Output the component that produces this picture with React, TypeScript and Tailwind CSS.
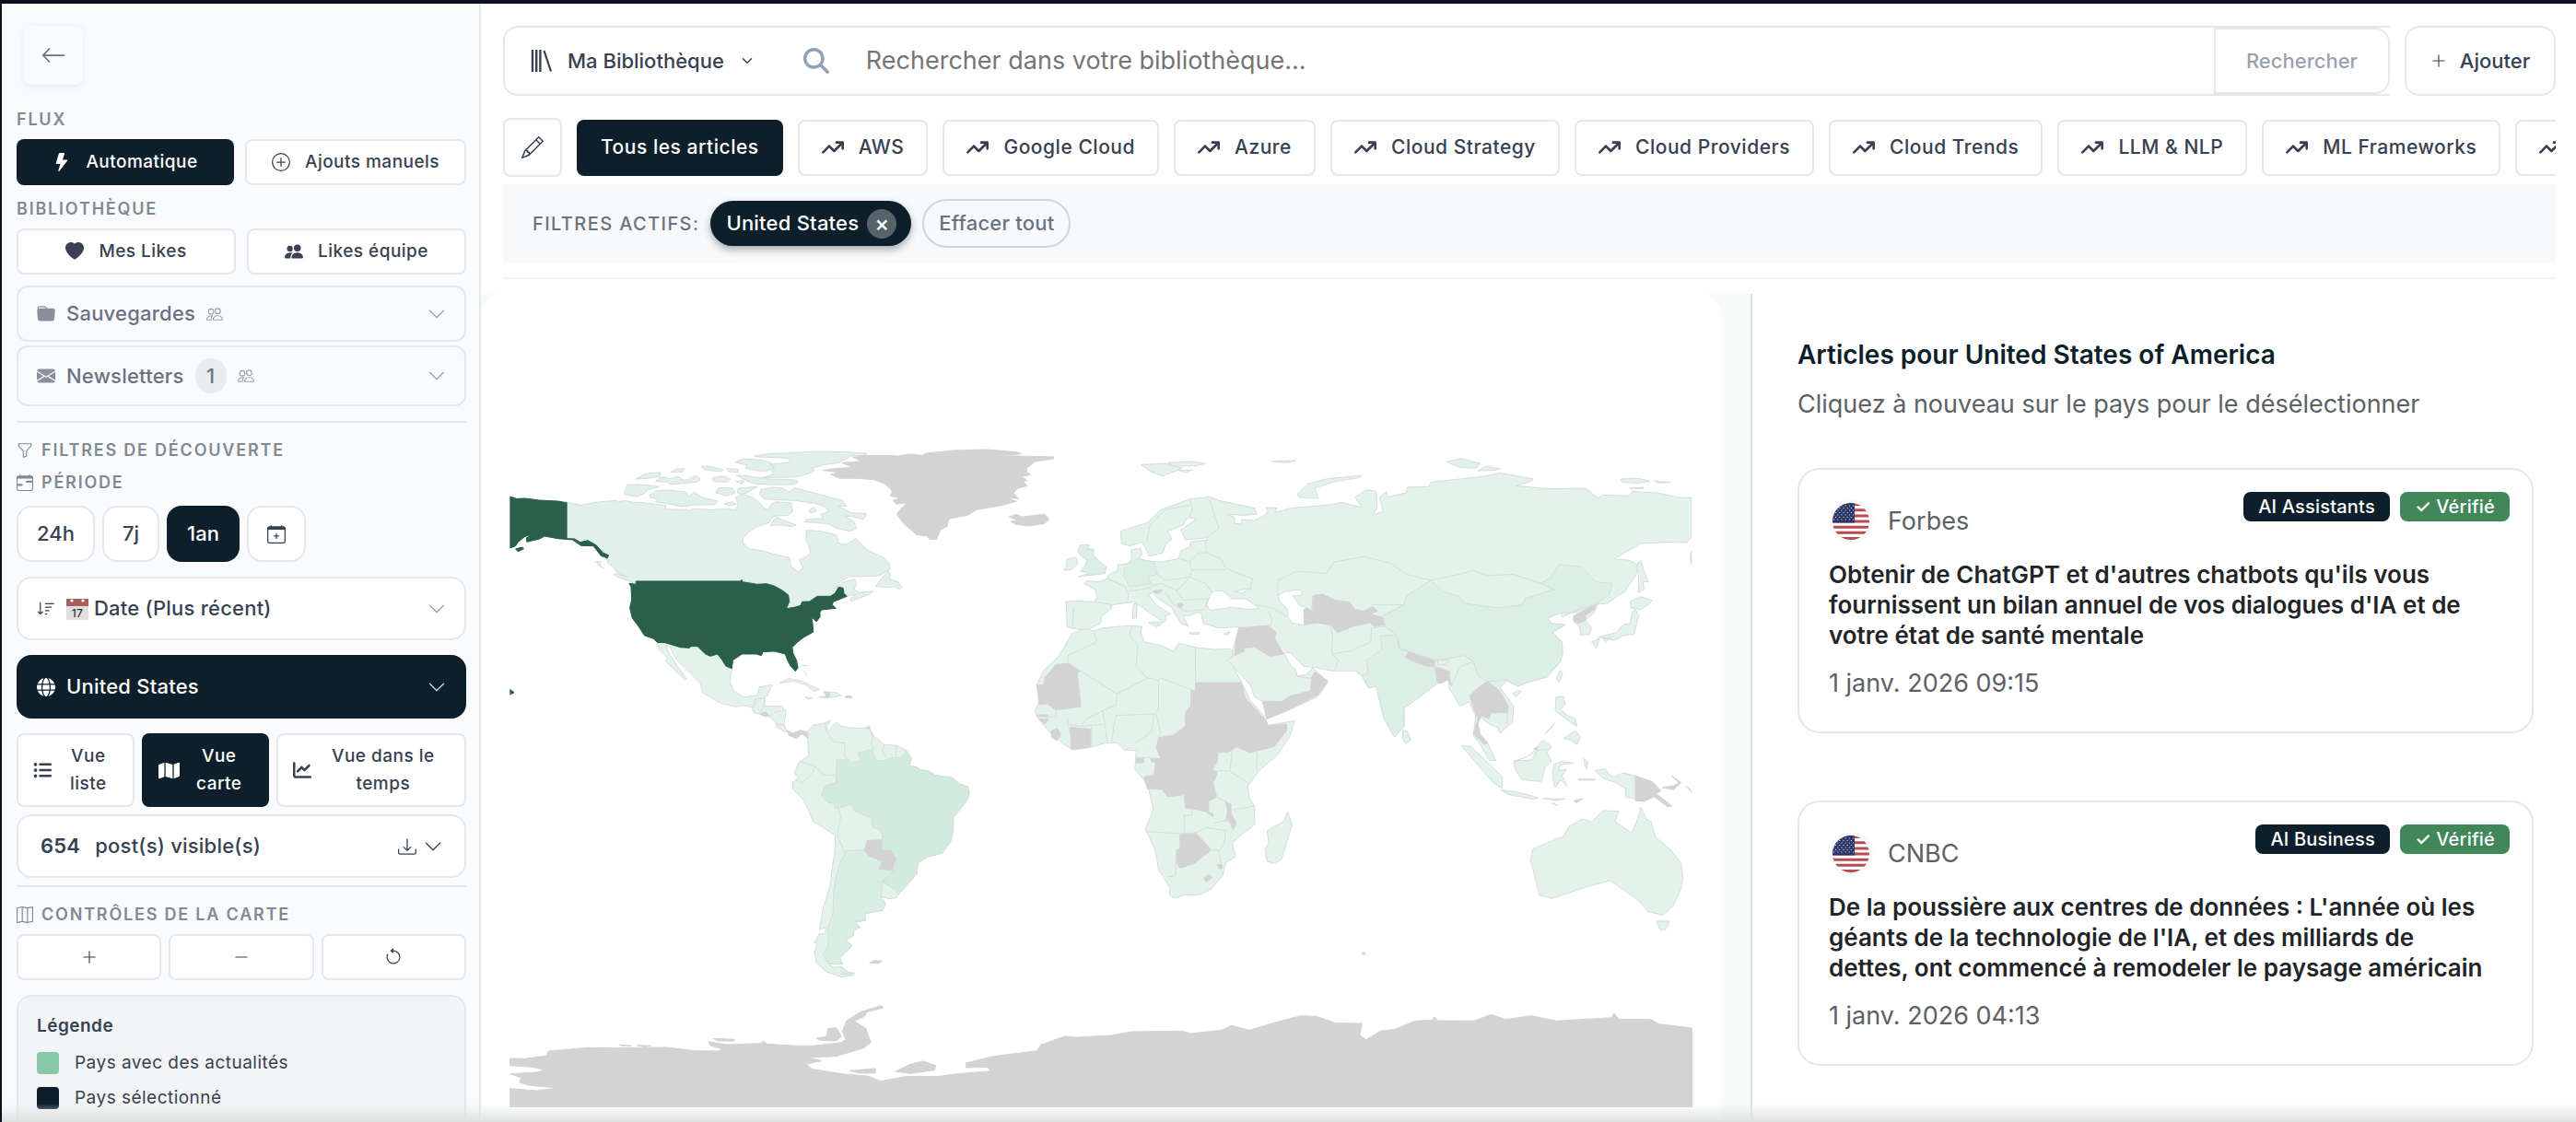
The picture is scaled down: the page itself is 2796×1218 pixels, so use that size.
import type { ReactNode } from "react";
import {
  BsArrowCounterclockwise,
  BsArrowLeft,
  BsCalendarPlus,
  BsCalendarRange,
  BsChevronDown,
  BsDashLg,
  BsDownload,
  BsEnvelopeFill,
  BsFolderFill,
  BsFunnel,
  BsHeartFill,
  BsLightningFill,
  BsMap,
  BsPencil,
  BsPeople,
  BsPeopleFill,
  BsPlusCircle,
  BsPlusLg,
  BsSortDown,
} from "react-icons/bs";
import { FaArrowTrendUp, FaChartLine, FaGlobe, FaListUl, FaMagnifyingGlass, FaMap } from "react-icons/fa6";
import { ChevronDown } from "lucide-react";

const LIGHT = "#e4f2ec";
const MID = "#dcefe7";
const GREY = "#d3d3d3";
const DARK = "#2a5f49";

type Shape = { fill: string; d: string };

const northAmerica: Shape[] = [
  {
    fill: "#e1f0ea",
    d: "M184 257 L225 265 L260 256 L315 250 L322 254 L340 250 L360 256 L380 256 L420 262 L448 266 L445 278 L500 280 L512 283 L520 277 L570 280 L600 278 L635 280 L640 260 L633 240 L655 230 L678 240 L700 260 L708 275 L720 280 L728 262 L740 254 L780 258 L785 285 L775 298 L740 300 L728 308 L722 322 L690 335 L665 355 L652 375 L652 388 L670 408 L700 412 L735 425 L776 436 L780 462 L800 483 L812 470 L803 443 L832 425 L830 400 L820 380 L822 347 L860 350 L890 358 L903 364 L906 388 L925 394 L953 374 L985 412 L1030 438 L1043 458 L1043 475 L1015 495 L985 497 L935 498 L910 515 L893 538 L920 515 L950 507 L955 520 L948 540 L960 550 L1000 545 L985 557 L940 578 L938 570 L955 555 L929 562 L921 552 L919 535 L907 532 L898 552 L885 562 L850 562 L830 579 L810 580 L806 592 L768 602 L776 578 L773 557 L735 528 L715 521 L690 523 L649 508 L648 512 L368 512 L372 535 L355 515 L312 495 L310 488 L345 498 L330 490 L318 485 L310 470 L295 455 L290 440 L295 428 L280 420 L262 395 L240 380 L220 386 L205 375 L184 374Z M405 232 L420 220 L445 216 L500 222 L510 236 L522 222 L545 240 L585 252 L580 263 L520 265 L490 270 L460 262 L420 255 L428 246 L405 240Z M345 198 L400 200 L430 205 L400 215 L390 228 L370 238 L337 230Z M368 180 L395 163 L433 158 L432 170 L400 178Z M420 188 L432 174 L460 178 L480 172 L495 185 L510 180 L525 168 L540 180 L530 190 L460 198 L450 190Z M462 158 L475 147 L497 146 L492 157Z M542 138 L570 140 L600 150 L595 156 L550 150Z M572 176 L600 170 L620 180 L612 190 L574 188Z M610 146 L640 148 L640 158 L615 156Z M683 105 L720 98 L770 95 L850 90 L930 92 L982 97 L975 105 L940 105 L925 115 L905 128 L870 133 L835 145 L843 152 L825 163 L800 172 L760 175 L705 175 L735 165 L728 155 L740 143 L725 133 L780 125 L770 112 L700 108Z M632 125 L655 114 L700 118 L728 128 L735 145 L715 154 L685 152 L660 145 L664 135Z M635 168 L665 170 L720 180 L790 183 L800 190 L790 198 L720 198 L680 195 L650 178Z M700 215 L730 207 L760 210 L775 222 L790 208 L840 225 L870 235 L900 245 L918 250 L928 268 L905 268 L940 290 L982 293 L972 312 L945 302 L925 300 L948 320 L955 340 L938 350 L900 340 L880 325 L815 320 L822 312 L865 308 L860 295 L880 285 L870 270 L845 260 L790 250 L745 248 L710 245 L697 230Z M640 210 L692 205 L668 222 L650 232 L638 225Z M590 208 L625 210 L632 225 L610 235 L580 225Z M633 188 L655 185 L650 196Z M602 260 L625 255 L635 262 L615 266Z M735 312 L742 305 L795 330 L780 335 L755 330 L725 332Z M828 282 L840 272 L848 285 L832 290Z M1005 530 L1020 505 L1040 480 L1045 495 L1040 505 L1065 515 L1075 530 L1068 540 L1055 530 L1040 533Z M262 448 L275 450 L272 460 L283 472 L270 462Z",
  },
  {
    fill: GREY,
    d: "M865 152 L890 147 L945 142 L915 127 L970 122 L945 110 L975 103 L1030 103 L1065 105 L1100 99 L1130 103 L1140 96 L1210 87 L1300 84 L1380 92 L1393 97 L1375 101 L1290 103 L1380 105 L1480 108 L1478 114 L1430 123 L1407 145 L1407 158 L1418 166 L1395 172 L1408 185 L1398 188 L1409 202 L1385 210 L1372 225 L1385 245 L1350 238 L1380 253 L1340 266 L1275 280 L1250 298 L1200 310 L1195 335 L1178 345 L1168 376 L1150 376 L1140 365 L1115 362 L1080 325 L1062 295 L1070 280 L1090 258 L1060 262 L1052 250 L1070 243 L1045 235 L1050 220 L1030 195 L1000 182 L960 178 L910 178 L885 165 L910 158Z M1360 303 L1380 295 L1395 303 L1420 300 L1455 294 L1467 312 L1455 325 L1415 333 L1378 328 L1365 318 L1383 315Z",
  },
  {
    fill: LIGHT,
    d: "M425 713 L446 713 L486 728 L510 730 L515 725 L532 725 L553 750 L566 757 L585 750 L595 765 L608 790 L623 797 L618 840 L628 870 L655 890 L690 885 L697 857 L730 850 L718 885 L712 893 L685 897 L688 910 L678 925 L655 917 L632 922 L590 908 L545 875 L540 845 L515 815 L478 770 L465 745 L460 728 L447 725 L460 755 L478 790 L503 830 L498 834 L470 800 L447 775 L452 762 L430 735Z M678 925 L685 897 L712 893 L710 920 L755 920 L767 935 L762 980 L770 1005 L760 1000 L740 985 L742 978 L725 955 L680 940Z M712 893 L708 920 L698 940 M767 932 L740 940 L722 952 M742 978 L762 982 M750 845 L775 830 L810 838 L857 866 L840 870 L820 850 L785 838Z M883 873 L900 875 L915 885 L885 893Z M818 890 L837 893 L825 897Z M815 805 l8 18 M808 788 l18 0",
  },
  {
    fill: GREY,
    d: "M698 945 L712 938 L722 950 L712 954Z M770 998 L785 1008 L805 998 L825 1005 L825 1025 L810 1010 L795 1025 L775 1015Z M855 890 L875 888 L868 872 L883 875 L882 892Z M926 887 h16 v6 h-16Z",
  },
  {
    fill: DARK,
    d: "M350 520 L368 523 L368 513 L648 513 L649 508 L652 515 L672 519 L690 523 L715 521 L735 528 L755 541 L773 557 L776 578 L768 602 L790 598 L806 592 L810 580 L830 579 L850 562 L885 562 L898 552 L907 532 L919 535 L921 552 L929 562 L893 580 L890 590 L900 601 L862 606 L857 615 L858 628 L848 645 L836 630 L840 678 L815 695 L797 712 L784 728 L785 745 L795 770 L799 795 L792 806 L780 790 L771 770 L765 750 L750 745 L735 741 L705 743 L702 755 L688 750 L650 750 L626 770 L623 797 L608 790 L595 765 L585 750 L566 757 L553 750 L532 725 L515 725 L510 730 L486 728 L446 713 L425 712 L415 700 L391 690 L375 660 L358 632 L352 600 L357 570 L355 530Z M34 237 L50 244 L75 243 L110 249 L160 252 L184 257 L184 374 L205 375 L220 386 L240 380 L262 395 L280 420 L295 428 L292 438 L275 430 L255 398 L222 397 L200 378 L160 374 L125 366 L112 375 L78 385 L77 372 L90 360 L72 368 L55 385 L48 398 L34 405Z M48 408 L65 402 L70 407 L55 416Z M34 866 L44 875 L34 882Z",
  },
];

const southAmerica: Shape[] = [
  {
    fill: LIGHT,
    d: "M103 105 L118 82 L155 75 L172 65 L160 85 L168 105 L175 88 L190 72 L205 85 L230 90 L290 92 L305 118 L335 145 L375 148 L403 165 L418 190 L412 215 L435 218 L440 225 L470 232 L490 245 L540 252 L568 275 L590 282 L594 305 L585 330 L545 382 L545 425 L537 460 L512 498 L470 510 L437 530 L435 565 L385 625 L372 643 L350 647 L325 640 L340 665 L330 685 L277 695 L278 718 L247 722 L262 740 L243 750 L240 770 L218 780 L238 800 L200 840 L208 860 L165 858 L180 870 L205 868 L225 885 L245 890 L240 896 L205 902 L160 885 L130 858 L123 820 L133 795 L123 790 L137 762 L155 760 L158 740 L138 748 L150 675 L170 610 L178 540 L187 480 L186 440 L120 395 L90 325 L58 290 L57 270 L75 250 L62 240 L75 205 L105 180 L103 130Z",
  },
  {
    fill: "#d2ebdf",
    d: "M190 195 L228 195 L235 207 L265 195 L255 172 L300 160 L308 195 L330 198 L365 187 L390 187 L403 165 L418 190 L412 215 L435 218 L440 225 L470 232 L490 245 L540 252 L568 275 L590 282 L594 305 L585 330 L545 382 L545 425 L537 460 L512 498 L470 510 L437 530 L435 565 L385 625 L330 590 L375 545 L370 520 L355 490 L328 490 L330 440 L322 420 L300 415 L298 385 L243 360 L240 338 L195 352 L183 350 L183 338 L162 332 L145 310 L155 280 L190 268Z",
  },
  {
    fill: "#d9eee4",
    d: "M222 490 L272 488 L285 500 L330 525 L320 550 L360 555 L370 535 L375 545 L330 590 L325 640 L340 665 L330 685 L277 695 L278 718 L247 722 L262 740 L243 750 L240 770 L218 780 L238 800 L200 840 L208 860 L165 858 L150 830 L165 800 L165 740 L180 690 L182 620 L190 570 L205 520Z M205 868 L225 885 L245 890 L205 892Z",
  },
  {
    fill: GREY,
    d: "M275 490 L283 458 L325 455 L328 490 L355 490 L370 515 L360 553 L320 550 L330 525 L290 508Z M290 856 L305 848 L328 850 L320 857Z M280 90 L292 83 L290 93Z",
  },
  {
    fill: "none",
    d: "M155 75 L160 105 L180 135 L215 140 L215 185 L228 195 M290 92 L300 120 L295 145 L308 160 M335 145 L330 165 L345 190 M372 148 L370 187 M80 200 L125 215 L150 243 L187 245 L190 268 M125 215 L120 235 L85 270 L68 262 M195 352 L203 380 L192 440 L205 470 L215 500 L222 490 M330 590 L380 630",
  },
];

const oldWorld: Shape[] = [
  {
    fill: LIGHT,
    d: "M147 674 L160 668 L180 675 L200 665 L255 658 L288 660 L285 680 L293 710 L330 722 L358 740 L370 715 L407 728 L450 735 L485 733 L492 745 L485 770 L510 840 L530 900 L560 950 L570 982 L630 967 L618 1020 L590 1080 L550 1130 L525 1180 L528 1220 L540 1245 L540 1305 L510 1340 L490 1365 L497 1410 L475 1430 L469 1470 L443 1515 L418 1533 L381 1535 L362 1545 L350 1535 L350 1510 L335 1472 L325 1455 L318 1390 L296 1320 L313 1255 L303 1190 L292 1160 L272 1125 L275 1065 L248 1062 L235 1040 L205 1040 L170 1055 L132 1062 L105 1035 L75 995 L55 960 L48 935 L58 905 L52 850 L70 800 L100 760 L115 725 L130 685Z M614 1265 L624 1305 L600 1420 L583 1432 L568 1425 L563 1385 L572 1365 L568 1325 L605 1295Z",
  },
  {
    fill: LIGHT,
    d: "M118 580 L135 577 L180 580 L187 565 L183 540 L158 520 L165 512 L190 515 L210 505 L215 490 L232 480 L235 460 L255 455 L265 440 L263 410 L285 405 L288 425 L282 438 L300 448 L330 450 L370 440 L375 415 L395 400 L397 385 L435 378 L430 372 L385 378 L375 345 L410 310 L390 305 L380 330 L345 350 L355 375 L340 395 L335 420 L305 432 L288 385 L260 398 L242 390 L240 350 L300 322 L330 280 L395 245 L440 238 L460 250 L500 262 L540 275 L545 295 L515 298 L480 295 L495 305 L495 325 L510 327 L510 312 L540 315 L560 300 L570 285 L565 272 L590 275 L585 290 L620 275 L700 265 L735 257 L780 272 L765 240 L790 215 L812 220 L815 270 L805 298 L828 285 L820 240 L835 220 L838 238 L880 225 L882 207 L930 205 L935 190 L1000 180 L1060 170 L1090 160 L1165 180 L1155 190 L1125 202 L1200 212 L1280 210 L1310 242 L1320 232 L1380 235 L1385 220 L1440 225 L1490 240 L1518 241 L1518 368 L1508 388 L1480 385 L1405 390 L1345 440 L1380 445 L1398 460 L1395 490 L1370 545 L1330 585 L1308 588 L1300 615 L1280 640 L1295 665 L1290 685 L1270 690 L1268 660 L1255 645 L1265 615 L1250 615 L1228 630 L1225 615 L1195 635 L1205 650 L1235 655 L1208 680 L1228 710 L1230 745 L1225 775 L1195 825 L1150 843 L1130 855 L1105 838 L1090 860 L1120 920 L1118 970 L1090 1008 L1085 990 L1068 980 L1045 955 L1040 980 L1042 1010 L1062 1040 L1080 1098 L1065 1095 L1048 1050 L1030 1015 L1035 950 L1020 905 L1000 920 L990 895 L975 860 L975 830 L960 845 L945 845 L905 895 L875 925 L875 985 L853 1020 L830 960 L812 855 L795 860 L780 820 L765 805 L715 805 L680 795 L650 790 L620 745 L605 745 L622 790 L632 800 L635 822 L655 818 L670 795 L705 840 L680 890 L620 930 L567 962 L558 905 L540 890 L530 850 L480 770 L492 755 L490 745 L500 690 L505 662 L460 665 L425 650 L420 615 L410 615 L395 625 L380 625 L392 660 L375 650 L362 620 L355 600 L320 565 L315 550 L302 555 L320 590 L352 620 L340 625 L342 640 L325 660 L330 640 L285 595 L270 580 L255 583 L220 590 L220 602 L198 625 L195 650 L170 668 L145 670 L120 662Z",
  },
  {
    fill: MID,
    d: "M935 510 L880 560 L875 590 L820 630 L832 660 L860 690 L865 730 L885 742 L943 772 L1010 755 L1030 775 L1040 820 L1060 840 L1105 835 L1130 855 L1150 843 L1195 825 L1225 775 L1230 745 L1228 710 L1208 680 L1235 655 L1205 650 L1195 635 L1225 615 L1250 615 L1305 588 L1335 555 L1340 520 L1305 515 L1270 465 L1220 458 L1205 500 L1180 520 L1210 540 L1145 570 L1140 590 L1085 600 L1010 585 L1000 563 L960 545Z M822 690 L855 688 L865 735 L885 742 L877 762 L943 792 L950 845 L905 895 L875 925 L875 985 L853 1020 L830 960 L812 855 L795 860 L780 820 L795 812 L790 770 L825 735Z M250 460 L280 440 L315 450 L322 490 L300 500 L310 520 L260 530 L247 495Z M150 395 L170 394 L165 407 L180 410 L178 425 L190 445 L208 465 L205 488 L145 498 L170 487 L150 480 L160 462 L165 445 L155 435 L143 415Z",
  },
  {
    fill: "#ffffff",
    d: "M440 560 L450 545 L470 545 L490 570 L520 570 L550 600 L530 605 L490 598 L440 607 L433 590Z M495 545 L535 535 L510 552Z M592 560 L610 545 L645 540 L647 560 L625 560 L640 590 L655 600 L650 655 L625 650 L615 630 L612 600 L597 580Z",
  },
  {
    fill: LIGHT,
    d: "M635 230 L660 195 L700 180 L780 168 L775 175 L715 190 L675 210 L683 243 L640 240Z M285 133 L340 130 L378 145 L335 170 L310 158Z M345 127 L400 123 L430 130 L410 137 L360 138Z M372 152 L400 150 L385 160Z M578 122 L632 120 L610 127Z M970 124 L1005 114 L1045 130 L1035 145 L1000 142Z M1040 153 L1060 138 L1090 147 L1075 152Z M1360 180 L1400 178 L1425 187 L1400 194 L1362 190Z M1435 186 l38 5 l-30 2Z M1380 210 l30 -3 v5Z M120 440 L140 435 L145 455 L130 475 L112 477 L118 465Z M270 585 L277 590 L275 632 L267 635 L267 608Z M302 648 L325 645 L322 662Z M395 680h22v5h-22Z M470 685 L485 677 L480 688Z M1405 445 L1412 480 L1422 515 L1410 515 L1412 540 L1400 550 L1400 490 L1395 460Z M1382 578 L1405 563 L1430 575 L1425 585 L1405 605 L1383 600Z M1393 605 L1400 625 L1390 685 L1365 690 L1345 705 L1310 695 L1350 680 L1365 655 L1382 650 L1385 615Z M1295 710 L1312 700 L1305 732Z M1320 700 l18 -5 l-12 15Z M1215 830 L1225 803 L1230 815 L1222 843Z M1118 880 L1130 868 L1137 872 L1125 890Z M872 998 L882 1003 L890 1030 L878 1043 L872 1025Z M1215 890 L1232 888 L1235 915 L1225 930 L1240 950 L1258 960 L1262 985 L1245 970 L1228 950 L1213 935Z M1232 1025 L1258 1000 L1270 1020 L1262 1045 L1248 1030Z M1190 1010 L1212 975 L1205 990Z M1003 1048 L1025 1052 L1060 1100 L1095 1150 L1095 1188 L1075 1170 L1045 1120Z M1090 1192 L1130 1200 L1175 1218 L1165 1223 L1110 1208Z M1185 1220 l50 2 l-20 5Z M1205 1235 l15 8Z M1120 1100 L1150 1085 L1170 1060 L1185 1030 L1205 1050 L1195 1070 L1205 1100 L1190 1120 L1183 1165 L1140 1160 L1125 1130Z M1120 1098 L1160 1095 L1175 1062 L1195 1062 M1210 1110 L1225 1100 L1255 1105 L1225 1110 L1220 1130 L1240 1125 L1228 1145 L1240 1180 L1225 1160 L1213 1185 L1207 1150Z M1303 1130 L1325 1123 L1335 1145 L1345 1150 L1365 1137 L1393 1147 L1393 1222 L1370 1215 L1372 1190 L1350 1170 L1320 1155Z M1278 1090 l8 10 l-3 25 l-4 -15Z M1265 1157h38v4h-38Z M1158 1420 L1163 1385 L1195 1365 L1230 1345 L1245 1310 L1275 1287 L1295 1298 L1320 1260 L1355 1262 L1347 1295 L1385 1333 L1397 1290 L1405 1248 L1418 1290 L1428 1295 L1437 1345 L1470 1385 L1495 1430 L1499 1480 L1496 1510 L1476 1573 L1454 1600 L1421 1589 L1399 1552 L1373 1525 L1336 1488 L1281 1509 L1207 1546 L1178 1536 L1172 1500Z M1440 1620 L1469 1620 L1460 1648 L1448 1648Z M1518 415 L1515 435 L1518 458Z",
  },
  {
    fill: GREY,
    d: "M122 780 L150 805 L143 812 L151 922 L95 932 L75 912 L58 915 L53 852 L67 850 L72 825 L95 785Z M53 948 h25 v4 h-25Z M57 962 L79 962 L70 978Z M85 1000 L98 992 L106 1015 L97 1032 L85 1020Z M127 988 L172 995 L172 1052 L130 1060Z M408 843 L510 843 L520 895 L565 965 L570 985 L612 978 L612 1000 L583 1052 L545 1065 L530 1072 L500 1052 L480 1070 L458 1070 L457 1100 L445 1125 L457 1135 L447 1170 L455 1215 L437 1230 L437 1265 L447 1270 L447 1280 L430 1262 L385 1250 L383 1208 L345 1215 L333 1190 L300 1190 L293 1150 L315 1145 L318 1105 L308 1098 L308 1090 L330 1090 L320 1055 L325 1022 L358 1015 L385 985 L385 940 L397 920 L398 870 L408 868Z M275 1090h17v14h-17Z M475 1230 L487 1240 L487 1268 L499 1300 L492 1322 L485 1298 L476 1290 L480 1260Z M373 1340 L408 1332 L443 1388 L405 1432 L378 1445 L372 1445 L366 1430 L366 1388 L373 1385Z M426 1480 L438 1468 L445 1478 L432 1493Z M458 1435 l9 2 v12 h-8Z M671 560 L692 555 L720 575 L752 580 L765 605 L785 610 L805 595 L815 610 L800 620 L825 630 L832 655 L808 660 L800 648 L765 658 L725 680 L710 655 L680 648 L652 655 L650 605 L658 600 L668 610Z M505 665 L570 657 L588 680 L585 700 L605 750 L575 757 L540 728 L515 730 L518 740 L495 755 L498 710Z M675 808 L703 838 L685 880 L620 930 L567 960 L558 903 L600 905 L620 887 L665 870 L668 825Z M885 742 L943 772 L943 792 L915 785 L877 762Z M945 792 L978 808 L975 820 L982 855 L972 835 L950 845Z M1022 885 L1045 855 L1062 840 L1085 865 L1108 920 L1105 940 L1070 942 L1065 960 L1048 952 L1040 975 L1045 1010 L1062 1040 L1055 1045 L1030 1010 L1040 960 L1030 925Z M1255 625 L1305 588 L1300 605 L1280 625 L1282 640 L1265 650 L1253 640Z M312 545 L335 540 L325 555Z M366 590 l8 -8 l7 8 l-7 8Z M1255 1228 L1275 1220 L1260 1235Z M1393 1147 L1430 1165 L1450 1195 L1440 1205 L1475 1245 L1465 1247 L1435 1215 L1412 1230 L1393 1228Z M1453 1185 L1480 1178 L1490 1170 L1475 1148 L1495 1168 L1478 1192Z M1507 1180 L1518 1195 V1200Z M1165 1060 l8 -8 v10Z M781 1722 h7 v6 h-7Z",
  },
  {
    fill: "none",
    d: "M180 675 L186 712 L122 755 L122 780 M150 805 L232 880 L300 828 L325 835 L330 828 L405 870 M265 660 L260 690 L278 720 L275 790 L300 828 M407 728 L408 843 M232 880 L230 915 L200 935 L165 960 L150 985 L125 980 M325 835 L325 930 L315 945 L230 950 L225 980 L220 1038 M95 932 L95 955 L55 955 M315 945 L310 1000 L270 1045 M320 945 L330 1010 L325 1022 M175 980 L175 1052 M205 980 L210 1038 M150 985 L205 978 L200 935 M275 1088 h35 M458 1130 L482 1130 L525 1170 M490 1060 L485 1130 M545 1065 V1130 M490 1258 L540 1245 M296 1328 L375 1335 L408 1332 M365 1388 L363 1472 L345 1475 M383 1275 V1335 M400 1255 V1275 H383 M408 1332 L430 1315 L475 1325 L472 1370 L460 1390 L443 1388 M460 1390 L465 1435 M455 1215 L475 1230 M450 1300 L485 1290 M120 960 L125 1000 M592 560 L592 510 L635 480 L700 488 L718 450 L785 433 L845 455 L880 490 L935 510 M671 560 V610 M875 590 L805 590 M935 510 L1000 490 L1030 478 L1060 495 L1120 490 L1180 520 M395 245 L400 275 L395 305 M300 380 L305 330 L340 280 L395 265 M440 250 L450 300 L460 340 L432 372 M430 380 L432 420 L465 440 L475 470 L535 505 L530 540 M395 450 L400 480 L395 500 L340 510 L322 490 M375 440 L395 450 L415 420 L432 420 M400 475 L475 475 M380 525 L395 500 L430 520 L445 550 M370 545 L330 520 L305 530 M430 600 L435 570 L380 575 L365 545 L380 525 M340 550 L360 590 L385 610 L430 605 M135 600 L132 658 M183 580 L222 590 M210 505 L250 530 L258 555 L255 583 M258 545 L310 535 M545 590 L580 600 L615 630 M570 610 L580 640 L575 660 M710 655 L715 700 L713 750 L728 770 L718 805 M713 750 L755 740 L800 710 L802 665 L832 660 M982 850 L1000 790 L1030 775 M1062 840 L1090 870 L1108 920 L1105 975 M668 830 L635 822 M950 770 h25 l-5 14 h-20Z",
  },
];

const antarctica: Shape[] = [
  {
    fill: GREY,
    d: "M16 327 L35 328 L62 318 L65 303 L115 292 L150 293 L215 291 L250 302 L282 303 L284 295 L270 285 L268 272 L290 282 L335 278 L337 270 L342 280 L380 286 L400 286 L437 275 L442 265 L438 240 L443 205 L460 177 L487 155 L490 162 L470 175 L465 192 L453 205 L468 230 L474 275 L465 293 L430 320 L395 324 L412 335 L392 345 L400 362 L440 378 L470 384 L487 401 L520 385 L560 386 L580 378 L627 368 L622 355 L595 357 L595 342 L630 320 L685 302 L690 283 L720 255 L735 258 L780 252 L805 240 L870 238 L880 246 L920 235 L932 220 L955 235 L985 212 L1020 188 L1040 190 L1065 212 L1098 213 L1095 250 L1103 266 L1122 237 L1140 232 L1165 205 L1187 202 L1190 192 L1194 204 L1240 205 L1262 184 L1280 200 L1313 188 L1345 205 L1415 194 L1418 180 L1424 199 L1465 200 L1475 215 L1517 228 V487 H16 V425 L50 432 L78 423 L40 415 L28 405 L30 390 L16 377 L50 372 L60 365 L45 355 L16 350Z M405 262 L418 255 L420 230 L430 227 L437 255 L430 270 L410 268Z M505 370 L525 345 L540 336 L557 350 L555 365 L525 376Z M447 367 L480 360 V375 L460 375Z M274 262 L302 265 L300 270 L280 270Z M155 282 l15 4 h-12Z M177 284 l18 2 l-8 4Z",
  },
];

function Region({ shapes, transform }: { shapes: Shape[]; transform: string }) {
  return (
    <g transform={transform}>
      {shapes.map((s) => (
        <path
          key={s.d}
          d={s.d}
          fill={s.fill}
          stroke={s.fill === GREY || s.fill === DARK ? s.fill : "#d6ddd9"}
          strokeWidth="1"
          strokeLinejoin="round"
          vectorEffect="non-scaling-stroke"
        />
      ))}
    </g>
  );
}

function WorldMap() {
  return (
    <svg
      viewBox="553 351 1284 851"
      preserveAspectRatio="xMidYMax meet"
      className="h-full w-full"
      role="img"
      aria-label="Carte du monde"
    >
      <Region shapes={antarctica} transform="translate(540 1040) scale(.85459 .33333)" />
      <Region shapes={southAmerica} transform="translate(840 760) scale(.35714 .33333)" />
      <Region shapes={oldWorld} transform="translate(1100 460) scale(.48469 .33333)" />
      <Region shapes={northAmerica} transform="translate(540 460) scale(.40816 .33333)" />
    </svg>
  );
}

function BooksIcon() {
  return (
    <svg viewBox="0 0 24 24" className="size-6 shrink-0" fill="none" stroke="currentColor" strokeWidth="2.4">
      <path d="M2 0v24M6.200 0v24M10.400 0v24" />
      <path d="M14.500 1l7.500 22.500" strokeWidth="2.200" />
    </svg>
  );
}

function CalendarEmoji() {
  return (
    <svg viewBox="0 0 24 24" className="size-6 shrink-0" aria-hidden="true">
      <path fill="#dfdfdf" d="M0 8h24v16H0z" />
      <path fill="#a45f60" d="M0 1h24v8H0z" />
      <circle cx="6" cy="3" r="1.600" fill="#fff" />
      <circle cx="18" cy="3" r="1.600" fill="#fff" />
      <text x="12" y="21" textAnchor="middle" fontSize="12" fill="#333" fontFamily="Inter, sans-serif">
        17
      </text>
    </svg>
  );
}

function Flag() {
  return (
    <svg viewBox="0 0 48 48" className="size-12 shrink-0" role="img" aria-label="Drapeau des États-Unis">
      <defs>
        <clipPath id="disc">
          <circle cx="24" cy="24" r="20" />
        </clipPath>
      </defs>
      <circle cx="24" cy="24" r="24" fill="#f8f9fb" />
      <g clipPath="url(#disc)">
        <path fill="#fff" d="M4 4h40v40H4z" />
        <path
          fill="#b94a50"
          d="M4 4h40v3H4zM4 10.200h40v3H4zM4 16.400h40v3H4zM4 22.500h40v3H4zM4 28.700h40v3H4zM4 34.800h40v3H4zM4 41h40v3H4z"
        />
        <path fill="#2b3768" d="M4 4h24v21.500H4z" />
        <g stroke="#d5d9e6" strokeWidth="1.200" strokeDasharray="1.200 3">
          <path d="M5 7h22M5 12h22M5 17h22M5 22h22" />
          <path d="M7 9.500h20M7 14.500h20M7 19.500h20" />
        </g>
      </g>
    </svg>
  );
}

function SectionLabel({ icon, children }: { icon?: ReactNode; children: ReactNode }) {
  return (
    <h2 className="flex h-6 items-center gap-[9px] text-[18px] leading-6 font-semibold tracking-widest text-[#7f8b93] uppercase">
      {icon}
      {children}
    </h2>
  );
}

const base = "flex items-center rounded-lg text-[19px] font-medium tracking-wide";
const field = "flex shrink-0 items-center text-[22px] font-medium tracking-[0.01em]";

function SideButton({ active, icon, children }: { active?: boolean; icon: ReactNode; children: ReactNode }) {
  return (
    <button
      type="button"
      className={`${base} h-[50px] flex-1 justify-center gap-4 ${active ? "bg-[#0d1f2b] text-white" : "border-2 border-gray-200 bg-white text-[#374151]"}`}
    >
      {icon}
      {children}
    </button>
  );
}

function Sidebar() {
  return (
    <aside className="flex w-[520px] shrink-0 flex-col overflow-hidden border-r-2 border-gray-200 bg-[#fafbfd] pt-6 pr-[14px] pl-4 text-[#374151]">
      <button
        type="button"
        aria-label="Retour"
        className="ml-2 flex size-16 shrink-0 items-center justify-center rounded-lg bg-[#fafbfd] text-gray-500 shadow-[0_2px_8px_rgba(0,0,0,0.07)]"
      >
        <BsArrowLeft className="size-7" />
      </button>

      <div className="mt-[26px]">
        <SectionLabel>Flux</SectionLabel>
      </div>
      <div className="mt-[9px] flex gap-3">
        <SideButton active icon={<BsLightningFill className="size-5" />}>
          Automatique
        </SideButton>
        <SideButton icon={<BsPlusCircle className="size-5" />}>Ajouts manuels</SideButton>
      </div>

      <div className="mt-[14px]">
        <SectionLabel>Bibliothèque</SectionLabel>
      </div>
      <div className="mt-[9px] flex gap-3">
        <SideButton icon={<BsHeartFill className="size-5" />}>Mes Likes</SideButton>
        <SideButton icon={<BsPeopleFill className="size-5" />}>Likes équipe</SideButton>
      </div>

      <button
        type="button"
        aria-expanded="false"
        className={`${field} mt-3 h-[61px] rounded-xl border-2 border-gray-200 px-5 text-gray-500`}
      >
        <BsFolderFill className="size-5 text-[#8b8f9b]" />
        <span className="ml-3">Sauvegardes</span>
        <BsPeople className="ml-3 size-[18px] text-gray-400" />
        <BsChevronDown className="ml-auto size-5 text-gray-400" />
      </button>
      <button
        type="button"
        aria-expanded="false"
        className={`${field} mt-1 h-[66px] rounded-xl border-2 border-gray-200 px-5 text-gray-500`}
      >
        <BsEnvelopeFill className="size-5 text-[#8b8f9b]" />
        <span className="ml-3">Newsletters</span>
        <span className="ml-3 flex h-[38px] w-[34px] items-center justify-center rounded-full bg-[#ebecee]">1</span>
        <BsPeople className="ml-3 size-[18px] text-gray-400" />
        <BsChevronDown className="ml-auto size-5 text-gray-400" />
      </button>

      <hr className="mt-4 border-t-2 border-slate-200" />

      <div className="mt-[18px] flex flex-col gap-[11px]">
        <SectionLabel icon={<BsFunnel className="size-[18px]" />}>Filtres de découverte</SectionLabel>
        <SectionLabel icon={<BsCalendarRange className="size-[18px]" />}>Période</SectionLabel>
      </div>

      <div className="mt-[13px] flex gap-2 text-[22px] font-medium">
        <button type="button" className="h-[61px] rounded-2xl border-2 border-gray-200 bg-white px-5">
          24h
        </button>
        <button type="button" className="h-[61px] rounded-2xl border-2 border-gray-200 bg-white px-5">
          7j
        </button>
        <button type="button" aria-pressed="true" className="h-[61px] rounded-2xl bg-[#0d1f2b] px-[22px] text-white">
          1an
        </button>
        <button
          type="button"
          aria-label="Choisir une période"
          className="flex h-[61px] w-16 items-center justify-center rounded-2xl border-2 border-gray-200 bg-white"
        >
          <BsCalendarPlus className="size-5" />
        </button>
      </div>

      <label className={`${field} mt-4 h-[69px] rounded-2xl border-2 border-gray-200 bg-white px-5`}>
        <BsSortDown className="mr-3 size-5" />
        <CalendarEmoji />
        <select aria-label="Trier par" className="ml-[6px] min-w-0 flex-1 appearance-none bg-transparent outline-none">
          <option>Date (Plus récent)</option>
        </select>
        <BsChevronDown className="size-5 text-gray-400" />
      </label>

      <label className={`${field} mt-4 h-[69px] rounded-2xl bg-[#0d1f2b] px-[22px] text-white`}>
        <FaGlobe className="size-5" />
        <select aria-label="Pays" className="ml-3 min-w-0 flex-1 appearance-none bg-transparent outline-none">
          <option>United States</option>
        </select>
        <BsChevronDown className="size-5 text-gray-300" />
      </label>

      <div className="mt-4 flex gap-2 leading-[30px]">
        <button type="button" className={`${base} h-20 w-32 gap-5 border-2 border-gray-200 bg-white pl-4`}>
          <FaListUl className="size-5" />
          <span>
            Vue
            <br />
            liste
          </span>
        </button>
        <button
          type="button"
          aria-pressed="true"
          className={`${base} h-20 w-[138px] gap-[18px] bg-[#0d1f2b] pl-[18px] text-white`}
        >
          <FaMap className="size-[23px]" />
          <span>
            Vue
            <br />
            carte
          </span>
        </button>
        <button type="button" className={`${base} h-20 flex-1 gap-[22px] border-2 border-gray-200 bg-white pl-4`}>
          <FaChartLine className="size-5" />
          <span>
            Vue dans le
            <br />
            temps
          </span>
        </button>
      </div>

      <div className={`${field} mt-2 h-[69px] rounded-2xl border-2 border-gray-200 bg-white px-6`}>
        <strong className="font-semibold">654</strong>
        <span className="ml-4">post(s) visible(s)</span>
        <button type="button" aria-label="Exporter" className="ml-auto flex items-center gap-2">
          <BsDownload className="size-5" />
          <BsChevronDown className="size-5" />
        </button>
      </div>

      <hr className="mt-2 border-t-2 border-slate-200" />
      <div className="mt-[18px]">
        <SectionLabel icon={<BsMap className="size-[18px]" />}>Contrôles de la carte</SectionLabel>
      </div>
      <div className="mt-[9px] grid grid-cols-3 gap-2">
        <button
          type="button"
          aria-label="Zoom avant"
          className={`${base} h-[50px] justify-center border-2 border-gray-200 bg-white`}
        >
          <BsPlusLg className="size-[18px]" />
        </button>
        <button
          type="button"
          aria-label="Zoom arrière"
          className={`${base} h-[50px] justify-center border-2 border-gray-200 bg-white`}
        >
          <BsDashLg className="size-[18px]" />
        </button>
        <button
          type="button"
          aria-label="Réinitialiser"
          className={`${base} h-[50px] justify-center border-2 border-gray-200 bg-white`}
        >
          <BsArrowCounterclockwise className="size-5" />
        </button>
      </div>

      <section className="mt-4 h-60 shrink-0 rounded-2xl border-2 border-gray-200 bg-[#f3f4f6] px-5 pt-5 text-[19px] leading-6 tracking-wide">
        <h3 className="font-semibold">Légende</h3>
        <ul className="mt-4 flex flex-col gap-[14px]">
          <li className="flex items-center gap-[17px]">
            <span className="size-6 rounded bg-[#86c8a5]" />
            Pays avec des actualités
          </li>
          <li className="flex items-center gap-[17px]">
            <span className="size-6 rounded bg-[#0d1f2b]" />
            Pays sélectionné
          </li>
        </ul>
      </section>
    </aside>
  );
}

const topics = [
  "AWS",
  "Google Cloud",
  "Azure",
  "Cloud Strategy",
  "Cloud Providers",
  "Cloud Trends",
  "LLM & NLP",
  "ML Frameworks",
];

function Header() {
  return (
    <header className="mr-[22px] ml-6 border-b-2 border-gray-100 pt-6 pb-4 text-[#374151]">
      <div className="flex gap-4">
        <form className="flex h-[76px] flex-1 items-center rounded-l-2xl border-y-2 border-l-2 border-gray-200 bg-white pl-7">
          <BooksIcon />
          <select
            aria-label="Source"
            className="ml-4 field-sizing-content appearance-none bg-transparent text-[22px] font-medium outline-none"
          >
            <option>Ma Bibliothèque</option>
          </select>
          <ChevronDown className="ml-4 size-[18px]" />
          <FaMagnifyingGlass className="ml-[52px] size-7 text-slate-400" />
          <input
            type="search"
            aria-label="Rechercher"
            placeholder="Rechercher dans votre bibliothèque..."
            className="ml-10 min-w-0 flex-1 self-stretch bg-transparent text-[27px] outline-none placeholder:text-[#757575]"
          />
          <button
            type="button"
            className="w-[191px] self-stretch rounded-r-2xl border-2 border-gray-200 text-[22px] font-medium text-gray-400"
          >
            Rechercher
          </button>
        </form>
        <button
          type="button"
          className="flex w-[164px] items-center justify-center gap-[14px] rounded-2xl border-2 border-gray-200 text-[22px] font-medium"
        >
          <BsPlusLg className="size-[18px]" />
          Ajouter
        </button>
      </div>

      <nav className="mt-6 flex items-center gap-4 overflow-hidden text-[21px] font-medium tracking-wide">
        <button
          type="button"
          aria-label="Modifier les sujets"
          className="flex size-16 shrink-0 items-center justify-center rounded-lg border-2 border-gray-200"
        >
          <BsPencil className="size-6" />
        </button>
        <button type="button" aria-pressed="true" className="h-[61px] shrink-0 rounded-lg bg-[#0d1f2b] px-[26px] text-white">
          Tous les articles
        </button>
        {topics.map((t) => (
          <button
            key={t}
            type="button"
            className="flex h-[61px] shrink-0 items-center gap-4 rounded-lg border-2 border-gray-200 px-6"
          >
            <FaArrowTrendUp className="size-6" />
            {t}
          </button>
        ))}
        <button
          type="button"
          aria-label="Sujet suivant"
          className="flex h-[61px] w-40 shrink-0 items-center rounded-lg border-2 border-gray-200 px-6"
        >
          <FaArrowTrendUp className="size-6" />
        </button>
      </nav>

      <div className="mt-2 flex h-[85px] items-center bg-[#f8f9fb] pl-8">
        <span className="text-xl font-medium tracking-[0.07em] text-gray-500 uppercase">Filtres actifs:</span>
        <span className="ml-3 flex h-[49px] items-center gap-[9px] rounded-full bg-[#0d1f2b] pr-4 pl-[17px] text-[22px] font-medium tracking-[0.01em] text-white shadow-[0_4px_8px_rgba(13,31,43,0.35)]">
          United States
          <button
            type="button"
            aria-label="Retirer United States"
            className="flex size-8 items-center justify-center rounded-full bg-[#56636b] text-2xl leading-8"
          >
            ×
          </button>
        </span>
        <button
          type="button"
          className="ml-3 h-[53px] rounded-full border-2 border-gray-300 px-4 text-[22px] font-medium tracking-[0.01em] text-gray-500"
        >
          Effacer tout
        </button>
      </div>
    </header>
  );
}

const articles = [
  {
    source: "Forbes",
    tag: "AI Assistants",
    title:
      "Obtenir de ChatGPT et d'autres chatbots qu'ils vous fournissent un bilan annuel de vos dialogues d'IA et de votre état de santé mentale",
    date: "1 janv. 2026 09:15",
  },
  {
    source: "CNBC",
    tag: "AI Business",
    title:
      "De la poussière aux centres de données : L'année où les géants de la technologie de l'IA, et des milliards de dettes, ont commencé à remodeler le paysage américain",
    date: "1 janv. 2026 04:13",
  },
];

function ArticleCard({ source, tag, title, date }: (typeof articles)[number]) {
  return (
    <article className="rounded-3xl border-2 border-[#e7e7e7] bg-white pt-6 pr-6 pb-8 pl-8">
      <div className="flex items-start">
        <div className="mt-2 flex items-center gap-4">
          <Flag />
          <span className="text-[27px] leading-8 text-[#5c6166]">{source}</span>
        </div>
        <div className="ml-auto flex gap-[11px] text-xl leading-8 font-medium tracking-[0.01em] text-white">
          <span className="rounded-lg bg-[#0d1f2b] px-4">{tag}</span>
          <span className="rounded-lg bg-[#42875a] px-4">✓ Vérifié</span>
        </div>
      </div>
      <h3 className="mt-[17px] pr-4 text-[26px] leading-[33px] font-semibold text-[#212529]">{title}</h3>
      <p className="mt-4 text-[27px] leading-10 text-[#5c6166]">{date}</p>
    </article>
  );
}

export default function App() {
  return (
    <div className="relative flex h-screen overflow-hidden border-t-4 border-l-2 border-[#0b1020] bg-white font-['Inter',sans-serif]">
      <Sidebar />
      <main className="flex min-w-0 flex-1 flex-col bg-[#fefefe]">
        <Header />
        <div className="mt-4 grid min-h-0 flex-1 grid-cols-[1378fr_896fr]">
          <div className="min-h-0 bg-[#f9fafa] pr-8">
            <section className="h-full rounded-t-3xl bg-white px-[31px] pt-8 pb-4">
              <WorldMap />
            </section>
          </div>
          <section className="overflow-hidden border-l-2 border-[#dcdfe2] pt-[46px] pr-[46px] pl-[49px]">
            <h2 className="text-[28px] leading-10 font-semibold text-[#0d1f2b]">Articles pour United States of America</h2>
            <p className="mt-[14px] text-[27px] leading-10 text-[#5c6166]">
              Cliquez à nouveau sur le pays pour le désélectionner
            </p>
            <div className="mt-[49px] flex flex-col gap-[73px]">
              {articles.map((a) => (
                <ArticleCard key={a.source} {...a} />
              ))}
            </div>
          </section>
        </div>
      </main>
      <div className="pointer-events-none absolute inset-x-0 bottom-0 h-5 bg-linear-to-b from-transparent to-[#dfe2e1]" />
    </div>
  );
}
